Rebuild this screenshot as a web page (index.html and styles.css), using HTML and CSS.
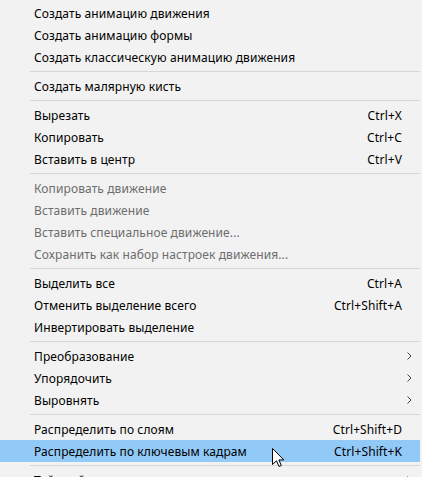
FILE: index.html
```html
<!DOCTYPE html>
<html lang="ru">
<head>
<meta charset="utf-8">
<title>Контекстное меню</title>
<link rel="stylesheet" href="styles.css">
</head>
<body>
<div class="menu">
  <div class="item"><span class="label">Создать анимацию движения</span><span class="key"></span><span class="sub"></span></div>
  <div class="item"><span class="label">Создать анимацию формы</span><span class="key"></span><span class="sub"></span></div>
  <div class="item"><span class="label">Создать классическую анимацию движения</span><span class="key"></span><span class="sub"></span></div>
  <div class="sep"></div>
  <div class="item"><span class="label">Создать малярную кисть</span><span class="key"></span><span class="sub"></span></div>
  <div class="sep"></div>
  <div class="item"><span class="label">Вырезать</span><span class="key">Ctrl+X</span><span class="sub"></span></div>
  <div class="item"><span class="label">Копировать</span><span class="key">Ctrl+C</span><span class="sub"></span></div>
  <div class="item"><span class="label">Вставить в центр</span><span class="key">Ctrl+V</span><span class="sub"></span></div>
  <div class="sep"></div>
  <div class="item disabled"><span class="label">Копировать движение</span><span class="key"></span><span class="sub"></span></div>
  <div class="item disabled"><span class="label">Вставить движение</span><span class="key"></span><span class="sub"></span></div>
  <div class="item disabled"><span class="label">Вставить специальное движение...</span><span class="key"></span><span class="sub"></span></div>
  <div class="item disabled"><span class="label">Сохранить как набор настроек движения...</span><span class="key"></span><span class="sub"></span></div>
  <div class="sep"></div>
  <div class="item"><span class="label">Выделить все</span><span class="key">Ctrl+A</span><span class="sub"></span></div>
  <div class="item"><span class="label">Отменить выделение всего</span><span class="key">Ctrl+Shift+A</span><span class="sub"></span></div>
  <div class="item"><span class="label">Инвертировать выделение</span><span class="key"></span><span class="sub"></span></div>
  <div class="sep"></div>
  <div class="item"><span class="label">Преобразование</span><span class="key"></span><span class="sub"><svg class="chev" width="5" height="8" viewBox="0 0 5 8"><path d="M0.5 0.5 L4 4 L0.5 7.5" fill="none" stroke="#404040" stroke-width="1"/></svg></span></div>
  <div class="item"><span class="label">Упорядочить</span><span class="key"></span><span class="sub"><svg class="chev" width="5" height="8" viewBox="0 0 5 8"><path d="M0.5 0.5 L4 4 L0.5 7.5" fill="none" stroke="#404040" stroke-width="1"/></svg></span></div>
  <div class="item"><span class="label">Выровнять</span><span class="key"></span><span class="sub"><svg class="chev" width="5" height="8" viewBox="0 0 5 8"><path d="M0.5 0.5 L4 4 L0.5 7.5" fill="none" stroke="#404040" stroke-width="1"/></svg></span></div>
  <div class="sep"></div>
  <div class="item"><span class="label">Распределить по слоям</span><span class="key">Ctrl+Shift+D</span><span class="sub"></span></div>
  <div class="item active"><span class="label">Распределить по ключевым кадрам</span><span class="key">Ctrl+Shift+K</span><span class="sub"></span></div>
  <div class="sep"></div>
  <div class="item"><span class="label">Таймлайн</span><span class="key"></span><span class="sub"><svg class="chev" width="5" height="8" viewBox="0 0 5 8"><path d="M0.5 0.5 L4 4 L0.5 7.5" fill="none" stroke="#404040" stroke-width="1"/></svg></span></div>
</div>
<svg class="cursor" width="13" height="20" viewBox="0 0 13 20"><path d="M0.5 0.5 L0.5 16.5 L4.5 12.8 L7 18.5 L9.3 17.5 L6.9 11.9 L11.8 11.9 Z" fill="#ffffff" stroke="#000000" stroke-width="1" stroke-linejoin="miter"/></svg>
</body>
</html>
```

FILE: styles.css
```css
html, body {
  margin: 0;
  padding: 0;
  background: #f2f2f2;
  overflow: hidden;
}

body {
  width: 422px;
  height: 477px;
  position: relative;
  font-family: "Noto Sans", "Open Sans", sans-serif;
  font-size: 12px;
  letter-spacing: 0.1px;
  color: #000;
}

.menu {
  width: 420px;
  padding-top: 2px;
}

.item {
  display: grid;
  grid-template-columns: 1fr auto 18px;
  align-items: center;
  height: 22px;
  padding-left: 34px;
  white-space: nowrap;
}

.item.disabled {
  color: #6d6d6d;
}

.item.active {
  background: #91c9f7;
}

.key {
  text-align: right;
}

.sub {
  display: flex;
  align-items: center;
  padding-left: 5px;
}

.chev {
  display: block;
}

.sep {
  height: 7px;
  margin-left: 30px;
  display: flex;
  align-items: center;
}

.sep::before {
  content: "";
  display: block;
  width: 100%;
  height: 1px;
  background: #d7d7d7;
}

.cursor {
  position: absolute;
  left: 272px;
  top: 448px;
}
```
